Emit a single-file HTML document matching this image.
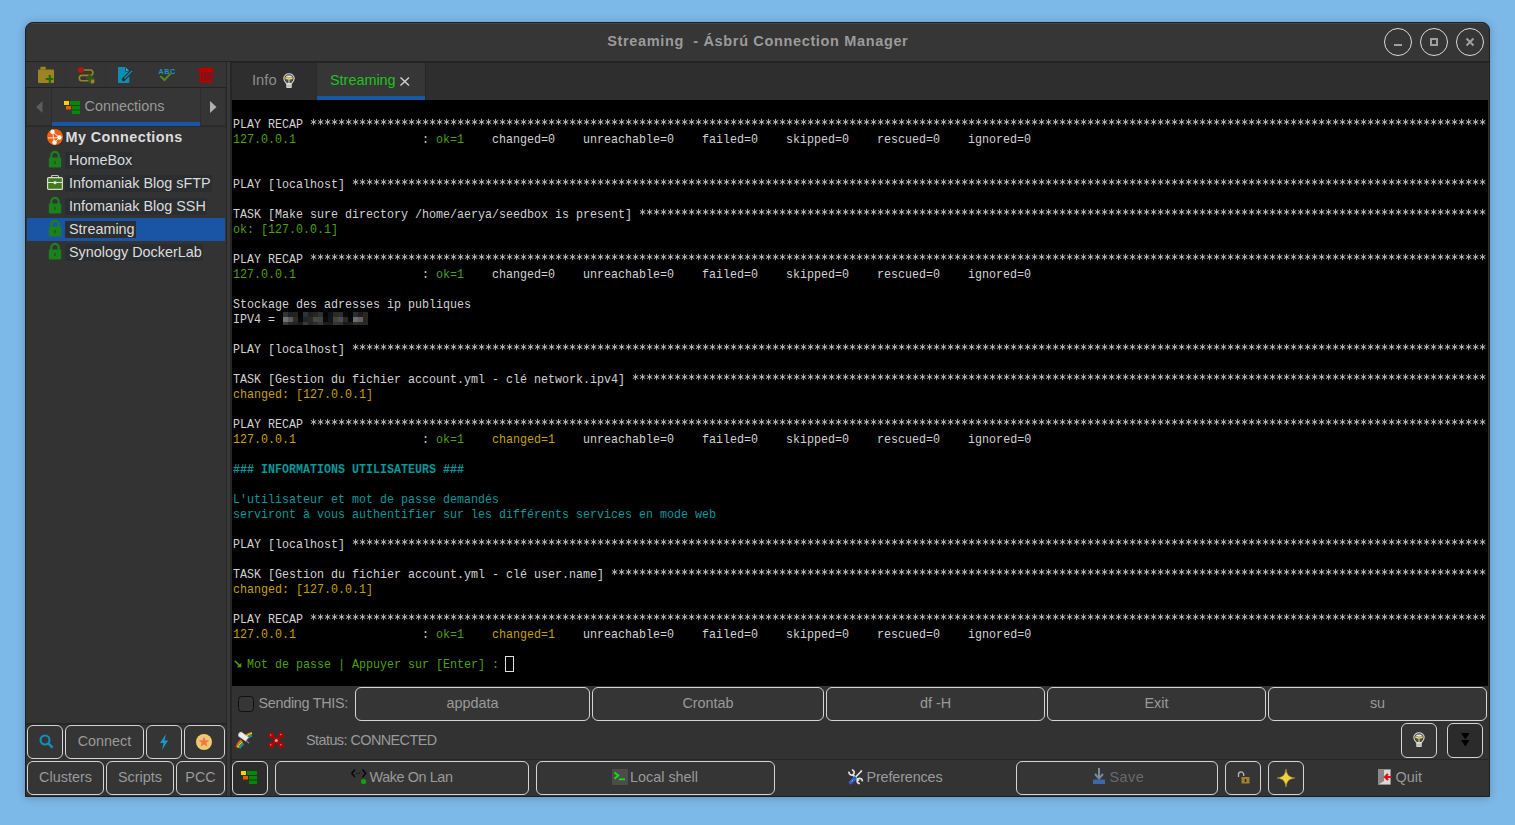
<!DOCTYPE html>
<html><head><meta charset="utf-8">
<style>
*{margin:0;padding:0;box-sizing:border-box}
html,body{width:1515px;height:825px;overflow:hidden}
body{background:#7cb8e8;font-family:"Liberation Sans",sans-serif;position:relative}
.a{position:absolute}
svg{position:absolute;overflow:visible}
#win{left:25px;top:22px;width:1465px;height:775px;background:#323232;border:1px solid #1e1e1e;border-radius:8px 8px 0 0;box-shadow:0 1px 8px rgba(0,0,0,.22)}
#title{left:26px;top:23px;width:1463px;height:38px;background:#363636;border-radius:7px 7px 0 0}
#titleline{left:26px;top:61px;width:1463px;height:1px;background:#232323}
#ttext{left:0;top:31px;width:1515px;text-align:center;color:#9b9b9b;font-weight:bold;font-size:14.5px;letter-spacing:0.65px;text-indent:0.65px;line-height:20px;white-space:pre}
.wb{width:28px;height:28px;border:1.5px solid #d9d9d9;border-radius:50%;top:28px}
.btn{position:absolute;border:1.5px solid #d4d4d4;border-radius:6px;background:#353535;color:#9a9a9a;font-size:14.4px;text-align:center;white-space:nowrap}
.ui{position:absolute;color:#9a9a9a;font-size:14.4px;white-space:nowrap;line-height:18px}
.tree{position:absolute;color:#dcdcdc;font-size:14.4px;white-space:nowrap;line-height:17px;background:#2b2e31;padding:0 1px 0 4px}
#term{left:232px;top:100px;width:1256px;height:586px;background:#000}
.tl{position:absolute;left:233px;font-family:"Liberation Mono",monospace;font-size:13px;line-height:15px;white-space:pre;transform-origin:0 0;transform:scaleX(0.8974);color:#d2d2d2}
.g{color:#4ea00a}.y{color:#c4a000}.c{color:#06989a}.cb{color:#06989a;font-weight:bold}
</style></head><body>
<div id="win" class="a"></div>
<div id="title" class="a"></div>
<div id="titleline" class="a"></div>
<div class="a" style="left:32px;top:23px;width:1451px;height:1px;background:#474747"></div>
<div id="ttext" class="a">Streaming  - Ásbrú Connection Manager</div>
<div class="a wb" style="left:1384px"></div>
<div class="a wb" style="left:1420px"></div>
<div class="a wb" style="left:1456px"></div>
<div class="a" style="left:1394px;top:44px;width:8px;height:2px;background:#a0a0a0"></div>
<div class="a" style="left:1430px;top:38px;width:8px;height:8px;border:2px solid #a0a0a0"></div>
<svg style="left:1466px;top:38px" width="8" height="8"><path d="M0.5 0.5L7.5 7.5M7.5 0.5L0.5 7.5" stroke="#a0a0a0" stroke-width="2"/></svg>

<!-- ===== left panel ===== -->
<div class="a" style="left:26px;top:62px;width:200px;height:25px;background:#353535"></div>
<div class="a" style="left:65px;top:62px;width:1px;height:25px;background:#323232"></div>
<div class="a" style="left:105px;top:62px;width:1px;height:25px;background:#323232"></div>
<div class="a" style="left:26px;top:87px;width:200px;height:1px;background:#232323"></div>
<!-- toolbar icons -->
<svg style="left:38px;top:66px" width="17" height="18"><rect x="2.3" y="0.8" width="5.5" height="3" rx="1" fill="#9c8420"/><rect x="0" y="3.4" width="16" height="13.6" rx="1" fill="#9c8420"/><path d="M7.8 13H15.3M11.8 9V17.2" stroke="#1a6a1a" stroke-width="2.2"/></svg>
<svg style="left:77px;top:66px" width="18" height="18"><path d="M5 4H13.2A2.7 2.7 0 0 1 13.2 9.4H5A2.7 2.7 0 0 0 5 14.8H12" stroke="#9c8420" stroke-width="1.6" fill="none"/><circle cx="4" cy="4" r="3" fill="#b01818"/><path d="M9 12.3H17M12.6 8.5V17" stroke="#2a5a18" stroke-width="2.4"/><path d="M13.8 13.5H17.5V15.5A2 2 0 0 1 15.5 17.5H13.8Z" fill="#9c8420"/></svg>
<svg style="left:117px;top:66px" width="18" height="18"><path d="M1.5 1H8.5L12.3 5V16.2A0.8 0.8 0 0 1 11.5 17H1.8A0.8 0.8 0 0 1 1 16.2V1.8A0.8 0.8 0 0 1 1.5 1Z" fill="#0a8fb5"/><path d="M8.5 1.5V5.3H12" stroke="#333" stroke-width="0.8" fill="#4ab0d0"/><path d="M6.5 13.5L15.5 4.5" stroke="#2e2e2e" stroke-width="3.4" stroke-linecap="round"/><path d="M7.2 12.8L15.2 4.8" stroke="#0a8fb5" stroke-width="1.3"/><path d="M6.2 13.8L7.5 12.5" stroke="#2e2e2e" stroke-width="2"/></svg>
<svg style="left:157px;top:66px" width="19" height="18"><text x="1.6" y="8" font-family="Liberation Sans" font-weight="bold" font-size="7.2" fill="#1a96c0" letter-spacing="0.5">ABC</text><path d="M3.2 10.1L7.5 14L13.8 7.4" stroke="#4a8a20" stroke-width="2" fill="none"/></svg>
<svg style="left:197px;top:66px" width="18" height="18"><rect x="0.9" y="2" width="16.1" height="2" rx="1" fill="#b80000"/><rect x="8" y="0.9" width="2.3" height="1.5" rx="0.7" fill="#b80000"/><path d="M2.1 4H16L15.6 16.1A0.8 0.8 0 0 1 14.8 16.8H3.1A0.8 0.8 0 0 1 2.4 16.1Z" fill="#b80000"/><path d="M4.9 6V15M7.9 6V15M11 6V15M14 6V15" stroke="#3a2a2a" stroke-width="1"/></svg>

<!-- tab header -->
<div class="a" style="left:26px;top:88px;width:200px;height:38px;background:#2d2d2d"></div>
<div class="a" style="left:27px;top:88px;width:24px;height:37px;background:#353535"></div>
<div class="a" style="left:52px;top:88px;width:148px;height:37px;background:#363636"></div>
<div class="a" style="left:201px;top:88px;width:24px;height:37px;background:#353535"></div>
<div class="a" style="left:52px;top:122px;width:148px;height:4px;background:#1a56a8"></div>
<svg style="left:36px;top:101px" width="7" height="12"><path d="M6.5 0V12L0 6Z" fill="#5c5c5c"/></svg>
<svg style="left:210px;top:101px" width="7" height="12"><path d="M0 0V12L6.5 6Z" fill="#b0b0b0"/></svg>
<svg style="left:64px;top:101px" width="17" height="13"><rect x="0" y="0" width="5" height="4" fill="#ffd000"/><rect x="6" y="0" width="10" height="4" fill="#008a00"/><rect x="2" y="5" width="5" height="3.5" fill="#e06000"/><rect x="8" y="5" width="8" height="3.5" fill="#008a00"/><rect x="8" y="9.5" width="8" height="3.5" fill="#008a00"/></svg>
<div class="ui" style="left:84.5px;top:97px;color:#9a9a9a">Connections</div>

<!-- tree -->
<div class="a" style="left:26px;top:126px;width:200px;height:598px;background:#333333"></div>
<div class="a" style="left:26px;top:126px;width:200px;height:1px;background:#282828"></div>
<div class="a" style="left:27px;top:218px;width:198px;height:23px;background:#1a54a4"></div>
<svg style="left:47px;top:129px" width="16" height="16"><circle cx="8" cy="8" r="8" fill="#f06010"/><path d="M5.5 2.8L12.5 8.5M5.5 2.8L7.5 13.5M12.5 8.5L7.5 13.5M1 9L12.5 8.5" stroke="#fff" stroke-width="0.8" fill="none"/><circle cx="5.5" cy="2.8" r="2.2" fill="#fff"/><circle cx="12.5" cy="8.5" r="2.2" fill="#fff"/><circle cx="7.5" cy="13.5" r="2.2" fill="#fff"/></svg>
<div class="ui" style="left:65.5px;top:127.5px;color:#dcdcdc;font-weight:bold;font-size:14.4px;letter-spacing:0.43px">My Connections</div>
<!-- lock icons -->
<svg style="left:48px;top:151px" width="14" height="17"><path d="M3.3 7V4.6A3.7 3.7 0 0 1 10.7 4.6V7" stroke="#1c801c" stroke-width="2.2" fill="none"/><rect x="0.8" y="6.5" width="12.4" height="10" rx="1.3" fill="#1c801c"/><rect x="6.2" y="10" width="1.6" height="3" fill="#155f15"/></svg>
<div class="tree" style="left:65px;top:152px">HomeBox</div>
<svg style="left:47px;top:175px" width="16" height="15"><rect x="4.5" y="0.5" width="7" height="3" rx="1" fill="none" stroke="#c0c8b8" stroke-width="1.2"/><rect x="0.6" y="2.6" width="14.8" height="11.8" rx="1" fill="#3e7a1e" stroke="#d8dcd0" stroke-width="1.2"/><path d="M1 7.5H15" stroke="#e0e4d8" stroke-width="1"/><circle cx="8" cy="7.7" r="1.6" fill="#e0e4d8"/></svg>
<div class="tree" style="left:65px;top:175px">Infomaniak Blog sFTP</div>
<svg style="left:48px;top:197px" width="14" height="17"><path d="M3.3 7V4.6A3.7 3.7 0 0 1 10.7 4.6V7" stroke="#1c801c" stroke-width="2.2" fill="none"/><rect x="0.8" y="6.5" width="12.4" height="10" rx="1.3" fill="#1c801c"/><rect x="6.2" y="10" width="1.6" height="3" fill="#155f15"/></svg>
<div class="tree" style="left:65px;top:198px">Infomaniak Blog SSH</div>
<svg style="left:48px;top:220px" width="14" height="17"><path d="M3.3 7V4.6A3.7 3.7 0 0 1 10.7 4.6V7" stroke="#1c801c" stroke-width="2.2" fill="none"/><rect x="0.8" y="6.5" width="12.4" height="10" rx="1.3" fill="#1c801c"/><rect x="6.2" y="10" width="1.6" height="3" fill="#155f15"/></svg>
<div class="tree" style="left:65px;top:221px">Streaming</div>
<svg style="left:48px;top:243px" width="14" height="17"><path d="M3.3 7V4.6A3.7 3.7 0 0 1 10.7 4.6V7" stroke="#1c801c" stroke-width="2.2" fill="none"/><rect x="0.8" y="6.5" width="12.4" height="10" rx="1.3" fill="#1c801c"/><rect x="6.2" y="10" width="1.6" height="3" fill="#155f15"/></svg>
<div class="tree" style="left:65px;top:244px">Synology DockerLab</div>

<!-- left buttons -->
<div class="a" style="left:26px;top:723px;width:200px;height:73px;background:#323232"></div>
<div class="a" style="left:26px;top:723px;width:200px;height:2px;background:#262626"></div>
<div class="btn" style="left:27px;top:725px;width:36px;height:34px"></div>
<svg style="left:38.5px;top:734px" width="16" height="16"><circle cx="6" cy="6" r="4.5" stroke="#1090bc" stroke-width="2.1" fill="none"/><path d="M9.3 9.3L13.6 13.6" stroke="#1090bc" stroke-width="2.5"/></svg>
<div class="btn" style="left:65px;top:725px;width:79px;height:34px;line-height:31px">Connect</div>
<div class="btn" style="left:146px;top:725px;width:36px;height:34px"></div>
<svg style="left:159px;top:734px" width="10" height="16"><path d="M7 0L1 9H4.5L3 16L9 6.5H5.5Z" fill="#1a9ac8"/></svg>
<div class="btn" style="left:184px;top:725px;width:41px;height:34px"></div>
<svg style="left:196px;top:734px" width="16" height="16"><circle cx="8" cy="8" r="8" fill="#f0d060"/><circle cx="8" cy="8" r="6.3" fill="#f2c080"/><path d="M8 2.6L9.5 6.2L13.2 6.4L10.3 8.8L11.3 12.5L8 10.5L4.7 12.5L5.7 8.8L2.8 6.4L6.5 6.2Z" fill="#f07838"/></svg>
<div class="btn" style="left:27px;top:761px;width:77px;height:34px;line-height:31px">Clusters</div>
<div class="btn" style="left:106px;top:761px;width:68px;height:34px;line-height:31px">Scripts</div>
<div class="btn" style="left:176px;top:761px;width:49px;height:34px;line-height:31px">PCC</div>

<!-- ===== separator ===== -->
<div class="a" style="left:226px;top:62px;width:6px;height:734px;background:#262626"></div>
<div class="a" style="left:227px;top:62px;width:3px;height:734px;background:#393939"></div>

<!-- ===== right panel ===== -->
<div class="a" style="left:232px;top:62px;width:1257px;height:1px;background:#252525"></div>
<div class="a" style="left:232px;top:63px;width:1256px;height:37px;background:#2e2e2e"></div>
<div class="a" style="left:317px;top:63px;width:108px;height:37px;background:#363636"></div>
<div class="a" style="left:317px;top:96px;width:108px;height:4px;background:#1a56a8"></div>
<div class="a" style="left:425px;top:63px;width:1px;height:37px;background:#262626"></div>
<div class="a" style="left:316px;top:63px;width:1px;height:37px;background:#2a2a2a"></div>
<div class="ui" style="left:252px;top:71px;color:#8c8c8c;font-size:14.8px">Info</div>
<svg style="left:283px;top:73px" width="12" height="16"><path d="M3.5 10.5C2 9 0.8 7.5 0.8 5.3A5.2 4.6 0 0 1 11.2 5.3C11.2 7.5 10 9 8.5 10.5Z" fill="#4a4a48" stroke="#d8d8d0" stroke-width="1.1"/><path d="M2.3 4.6C3.5 6.4 8.5 6.4 9.7 4.6" stroke="#f0e050" stroke-width="1.6" fill="none"/><ellipse cx="6" cy="3.6" rx="3" ry="1.2" fill="#e8e8e8"/><path d="M6 6.5V10" stroke="#ddd" stroke-width="1"/><rect x="3.2" y="10.5" width="5.6" height="4.5" rx="1" fill="#e0e0dc"/><path d="M3.2 12.3H8.8M3.2 13.8H8.8" stroke="#999" stroke-width="0.6"/></svg>
<div class="ui" style="left:330px;top:71px;color:#1fc21f">Streaming</div>
<svg style="left:400px;top:77px" width="10" height="9"><path d="M0.5 0.5L9 8.5M9 0.5L0.5 8.5" stroke="#cfcfcf" stroke-width="1.5"/></svg>

<div id="term" class="a"></div>
<svg style="left:0;top:0" width="0" height="0"><defs><pattern id="ast" patternUnits="userSpaceOnUse" x="0" y="0" width="7" height="15"><path d="M3.6 2.8V9.2M0.9 4.4L6.3 7.6M0.9 7.6L6.3 4.4" stroke="#b8b8b8" stroke-width="1"/></pattern></defs></svg>
<div class="tl" style="top:117px">PLAY RECAP </div>
<svg style="left:310px;top:116px" width="1176" height="15"><rect width="1176" height="15" fill="url(#ast)"/></svg>
<div class="tl" style="top:132px"><span class="g">127.0.0.1                 </span> : <span class="g">ok=1   </span> changed=0    unreachable=0    failed=0    skipped=0    rescued=0    ignored=0</div>
<div class="tl" style="top:177px">PLAY [localhost] </div>
<svg style="left:352px;top:176px" width="1134" height="15"><rect width="1134" height="15" fill="url(#ast)"/></svg>
<div class="tl" style="top:207px">TASK [Make sure directory /home/aerya/seedbox is present] </div>
<svg style="left:639px;top:206px" width="847" height="15"><rect width="847" height="15" fill="url(#ast)"/></svg>
<div class="tl" style="top:222px"><span class="g">ok: [127.0.0.1]</span></div>
<div class="tl" style="top:252px">PLAY RECAP </div>
<svg style="left:310px;top:251px" width="1176" height="15"><rect width="1176" height="15" fill="url(#ast)"/></svg>
<div class="tl" style="top:267px"><span class="g">127.0.0.1                 </span> : <span class="g">ok=1   </span> changed=0    unreachable=0    failed=0    skipped=0    rescued=0    ignored=0</div>
<div class="tl" style="top:297px">Stockage des adresses ip publiques</div>
<div class="tl" style="top:312px">IPV4 = </div>
<div class="tl" style="top:342px">PLAY [localhost] </div>
<svg style="left:352px;top:341px" width="1134" height="15"><rect width="1134" height="15" fill="url(#ast)"/></svg>
<div class="tl" style="top:372px">TASK [Gestion du fichier account.yml - clé network.ipv4] </div>
<svg style="left:632px;top:371px" width="854" height="15"><rect width="854" height="15" fill="url(#ast)"/></svg>
<div class="tl" style="top:387px"><span class="y">changed: [127.0.0.1]</span></div>
<div class="tl" style="top:417px">PLAY RECAP </div>
<svg style="left:310px;top:416px" width="1176" height="15"><rect width="1176" height="15" fill="url(#ast)"/></svg>
<div class="tl" style="top:432px"><span class="y">127.0.0.1                 </span> : <span class="g">ok=1   </span> <span class="y">changed=1   </span> unreachable=0    failed=0    skipped=0    rescued=0    ignored=0</div>
<div class="tl" style="top:462px"><span class="cb">### INFORMATIONS UTILISATEURS ###</span></div>
<div class="tl" style="top:492px"><span class="c">L'utilisateur et mot de passe demandés</span></div>
<div class="tl" style="top:507px"><span class="c">serviront à vous authentifier sur les différents services en mode web</span></div>
<div class="tl" style="top:537px">PLAY [localhost] </div>
<svg style="left:352px;top:536px" width="1134" height="15"><rect width="1134" height="15" fill="url(#ast)"/></svg>
<div class="tl" style="top:567px">TASK [Gestion du fichier account.yml - clé user.name] </div>
<svg style="left:611px;top:566px" width="875" height="15"><rect width="875" height="15" fill="url(#ast)"/></svg>
<div class="tl" style="top:582px"><span class="y">changed: [127.0.0.1]</span></div>
<div class="tl" style="top:612px">PLAY RECAP </div>
<svg style="left:310px;top:611px" width="1176" height="15"><rect width="1176" height="15" fill="url(#ast)"/></svg>
<div class="tl" style="top:627px"><span class="y">127.0.0.1                 </span> : <span class="g">ok=1   </span> <span class="y">changed=1   </span> unreachable=0    failed=0    skipped=0    rescued=0    ignored=0</div>
<div class="tl" style="top:657px"><span class="g">  Mot de passe | Appuyer sur [Enter] : </span></div>
<!-- blurred ip -->
<div class="a" style="left:283px;top:312px;width:85px;height:13px;display:grid;grid-template-columns:repeat(17,5px);grid-template-rows:5px 5px 3px">
<i style="background:#333"></i><i style="background:#1e2228"></i><i style="background:#26231f"></i><i style="background:#050505"></i><i style="background:#2f3335"></i><i style="background:#1c1f24"></i><i style="background:#2a2522"></i><i style="background:#303232"></i><i style="background:#050505"></i><i style="background:#0e1418"></i><i style="background:#2e2a26"></i><i style="background:#2a2e30"></i><i style="background:#0d0808"></i><i style="background:#050505"></i><i style="background:#2d2d2d"></i><i style="background:#1a1e22"></i><i style="background:#2a2622"></i>
<i style="background:#6f7370"></i><i style="background:#5f5955"></i><i style="background:#2f2c28"></i><i style="background:#080808"></i><i style="background:#1e2430"></i><i style="background:#2c2822"></i><i style="background:#4a4440"></i><i style="background:#3c4444"></i><i style="background:#0e0606"></i><i style="background:#0e1820"></i><i style="background:#4a4038"></i><i style="background:#4a4a58"></i><i style="background:#2c2a24"></i><i style="background:#000814"></i><i style="background:#6a7070"></i><i style="background:#6a5a58"></i><i style="background:#2a2622"></i>
<i style="background:#3a3a3a"></i><i style="background:#2a2826"></i><i style="background:#222"></i><i style="background:#1a1a1a"></i><i style="background:#383c3e"></i><i style="background:#222426"></i><i style="background:#2c2c2c"></i><i style="background:#343838"></i><i style="background:#1c1c1e"></i><i style="background:#1c1a18"></i><i style="background:#3a3430"></i><i style="background:#2e3034"></i><i style="background:#1c1a16"></i><i style="background:#1a1c18"></i><i style="background:#2e3030"></i><i style="background:#2a2a2a"></i><i style="background:#2a2624"></i>
</div>
<svg style="left:234px;top:660px" width="8" height="8"><path d="M0.8 0.8L6.6 6.6" stroke="#4ea00a" stroke-width="1.5"/><path d="M7.3 2.8V7.3H2.8Z" fill="#4ea00a"/></svg>
<!-- cursor -->
<div class="a" style="left:505px;top:656px;width:9px;height:16px;border:1px solid #e0e0e0"></div>

<!-- macro row -->
<div class="a" style="left:232px;top:686px;width:1256px;height:73px;background:#323232"></div>
<div class="a" style="left:238px;top:696px;width:16px;height:16px;border:1.6px solid #101010;border-radius:3.5px;background:#363636"></div>
<div class="ui" style="left:258.5px;top:694px;letter-spacing:-0.3px">Sending THIS:</div>
<div class="btn" style="left:355px;top:687px;width:235px;height:34px;line-height:31px">appdata</div>
<div class="btn" style="left:592px;top:687px;width:232px;height:34px;line-height:31px">Crontab</div>
<div class="btn" style="left:826px;top:687px;width:219px;height:34px;line-height:31px">df -H</div>
<div class="btn" style="left:1047px;top:687px;width:219px;height:34px;line-height:31px">Exit</div>
<div class="btn" style="left:1268px;top:687px;width:219px;height:34px;line-height:31px">su</div>

<!-- status row -->
<svg style="left:235px;top:731px" width="18" height="18"><g fill="none" stroke-width="1.1"><path d="M1 16C1.8 12.5 3.5 10 6 8.5" stroke="#e83020"/><path d="M2 16.5C2.8 13.2 4.3 11 6.7 9.6" stroke="#f0a020"/><path d="M3 16.8C3.8 14 5.2 12 7.4 10.7" stroke="#e8e030"/><path d="M4 17.1C4.8 14.8 6 13 8.1 11.8" stroke="#30b030"/><path d="M5 17.4C5.8 15.6 6.8 14 8.8 12.9" stroke="#2090e0"/><path d="M10.5 4.2C12.5 2.6 14.5 1.5 17 1.2" stroke="#f06020"/><path d="M11.2 5.3C13 3.8 14.8 2.8 17 2.4" stroke="#f0e020"/><path d="M11.9 6.4C13.5 5 15 4.1 17 3.6" stroke="#30b030"/><path d="M12.6 7.5C14 6.2 15.5 5.4 17 4.9" stroke="#2090e0"/></g><path d="M3.5 2.8L6.3 0.9L13.5 6.2L10.8 10.3L3.5 5.2Z" fill="#ececec" stroke="#c8c8c8" stroke-width="0.5"/><path d="M4.2 2.5L6 1.3" stroke="#f0d090" stroke-width="1.2"/><path d="M11.5 10L14.2 12.2" stroke="#808080" stroke-width="1.2"/></svg>
<svg style="left:268px;top:732px" width="17" height="17"><path d="M3.3 3.3L13.5 13.5M13.5 3L3.3 13.5" stroke="#b80000" stroke-width="2"/><circle cx="3.3" cy="3.5" r="2.7" fill="#b80000"/><circle cx="13.3" cy="3" r="2.7" fill="#b80000"/><circle cx="3.3" cy="13.3" r="2.7" fill="#b80000"/><circle cx="13.3" cy="13.3" r="2.7" fill="#b80000"/><circle cx="8.3" cy="8.5" r="2.9" fill="#c00000"/><circle cx="8.3" cy="8.5" r="1.5" fill="#f09090"/><circle cx="2.8" cy="3" r="0.7" fill="#f08080"/><circle cx="12.8" cy="2.5" r="0.7" fill="#f08080"/><circle cx="2.8" cy="12.8" r="0.7" fill="#f08080"/><circle cx="12.8" cy="12.8" r="0.7" fill="#f08080"/></svg>
<div class="ui" style="left:306px;top:731px;letter-spacing:-0.55px">Status: CONNECTED</div>
<div class="btn" style="left:1401px;top:723px;width:36px;height:35px"></div>
<svg style="left:1413px;top:732px" width="12" height="16"><path d="M3.5 10.5C2 9 0.8 7.5 0.8 5.3A5.2 4.6 0 0 1 11.2 5.3C11.2 7.5 10 9 8.5 10.5Z" fill="#4a4a48" stroke="#d8d8d0" stroke-width="1.1"/><path d="M2.3 4.6C3.5 6.4 8.5 6.4 9.7 4.6" stroke="#f0e050" stroke-width="1.6" fill="none"/><ellipse cx="6" cy="3.6" rx="3" ry="1.2" fill="#e8e8e8"/><path d="M6 6.5V10" stroke="#ddd" stroke-width="1"/><rect x="3.2" y="10.5" width="5.6" height="4.5" rx="1" fill="#e0e0dc"/><path d="M3.2 12.3H8.8M3.2 13.8H8.8" stroke="#999" stroke-width="0.6"/></svg>
<div class="btn" style="left:1447px;top:723px;width:36px;height:35px;background:#2b2b2b"></div>
<svg style="left:1461px;top:733px" width="9" height="14"><path d="M0 0H8.5L4.25 6.5Z" fill="#000"/><path d="M0 7H8.5L4.25 13.5Z" fill="#000"/></svg>
<div class="a" style="left:232px;top:759px;width:1256px;height:1px;background:#262626"></div>

<!-- bottom row -->
<div class="a" style="left:232px;top:760px;width:1256px;height:36px;background:#333333"></div>
<div class="btn" style="left:232px;top:761px;width:36px;height:34px;background:#2c2c2c"></div>
<svg style="left:241px;top:771px" width="17" height="13"><rect x="0" y="0" width="5" height="4" fill="#ffd000"/><rect x="6" y="0" width="10" height="4" fill="#008a00"/><rect x="2" y="5" width="5" height="3.5" fill="#e06000"/><rect x="8" y="5" width="8" height="3.5" fill="#008a00"/><rect x="8" y="9.5" width="8" height="3.5" fill="#008a00"/></svg>
<div class="btn" style="left:275px;top:761px;width:254px;height:34px"></div>
<svg style="left:351px;top:769px" width="16" height="16"><path d="M4 0.5L0.8 4.3L4 8.1M11.5 0.5L14.7 4.3L11.5 8.1" stroke="#000" stroke-width="1.3" fill="none"/><path d="M5.2 4.3H10.5" stroke="#000" stroke-width="1.1" stroke-dasharray="1.1 1.4"/><circle cx="12.6" cy="12.6" r="2.6" fill="#10a010"/></svg>
<div class="ui" style="left:369.5px;top:768px;letter-spacing:-0.4px">Wake On Lan</div>
<div class="btn" style="left:536px;top:761px;width:239px;height:34px"></div>
<svg style="left:612px;top:769px" width="16" height="16"><rect x="0" y="0" width="16" height="16" rx="1" fill="#4c4c4c"/><path d="M2.5 3.5L6.3 6.6L2.5 9.8" stroke="#10e010" stroke-width="2" fill="none"/><path d="M7 10.3H13" stroke="#10e010" stroke-width="1.8"/></svg>
<div class="ui" style="left:630px;top:768px">Local shell</div>
<svg style="left:848px;top:769px" width="16" height="16"><path d="M4.3 5.3L11 11.6" stroke="#e2e2e2" stroke-width="1.8"/><path d="M1.2 2.6A2.6 2.6 0 1 0 3.9 0.9" stroke="#e2e2e2" stroke-width="1.7" fill="none"/><path d="M14.3 12.3A2.6 2.6 0 1 0 11.9 14.5" stroke="#e2e2e2" stroke-width="1.7" fill="none"/><path d="M13.3 2.3L7 8.6" stroke="#e8e8e8" stroke-width="1.5"/><path d="M12 1.5L14.2 1.3L14 3.5Z" fill="#e8e8e8"/><path d="M6.8 9.3L2.6 13.5" stroke="#2a62c8" stroke-width="3.8" stroke-linecap="round"/><path d="M5.3 10.6L3.4 12.5" stroke="#8ab0f0" stroke-width="1"/></svg>
<div class="ui" style="left:866.5px;top:768px;letter-spacing:-0.15px">Preferences</div>
<div class="btn" style="left:1016px;top:761px;width:202px;height:34px"></div>
<svg style="left:1093px;top:768px" width="12" height="16"><path d="M6 0V9" stroke="#7a8a9a" stroke-width="2"/><path d="M2 6L6 10.5L10 6" stroke="#7a8a9a" stroke-width="2" fill="none"/><rect x="0" y="11.5" width="12" height="4.5" fill="#3c6aa8"/></svg>
<div class="ui" style="left:1109.5px;top:768px;color:#6a6a6a;letter-spacing:0.5px">Save</div>
<div class="btn" style="left:1225px;top:761px;width:36px;height:34px"></div>
<svg style="left:1237px;top:771px" width="13" height="13"><path d="M1.5 6V3.5A2.6 2.6 0 0 1 6.7 3.5V5" stroke="#b8b8b8" stroke-width="1.3" fill="none"/><rect x="4.5" y="6" width="8" height="6.5" fill="#a08030"/><rect x="7.8" y="8" width="1.4" height="3" fill="#302010"/></svg>
<div class="btn" style="left:1268px;top:761px;width:36px;height:34px"></div>
<svg style="left:1276px;top:768px" width="20" height="20"><path d="M10 1C10.8 7 13 9.2 19 10C13 10.8 10.8 13 10 19C9.2 13 7 10.8 1 10C7 9.2 9.2 7 10 1Z" fill="#f0d040" stroke="#b09020" stroke-width="0.6"/></svg>
<svg style="left:1378px;top:769px" width="14" height="16"><rect x="0.5" y="0.5" width="12" height="15" fill="#d8d8d8" stroke="#999" stroke-width="0.6"/><path d="M0.5 15.5L6 12V0.5H0.5Z" fill="#888"/><path d="M13.5 8H7M10 5L7 8L10 11" stroke="#e01010" stroke-width="2.2" fill="none"/></svg>
<div class="ui" style="left:1395.5px;top:768px">Quit</div>
</body></html>
